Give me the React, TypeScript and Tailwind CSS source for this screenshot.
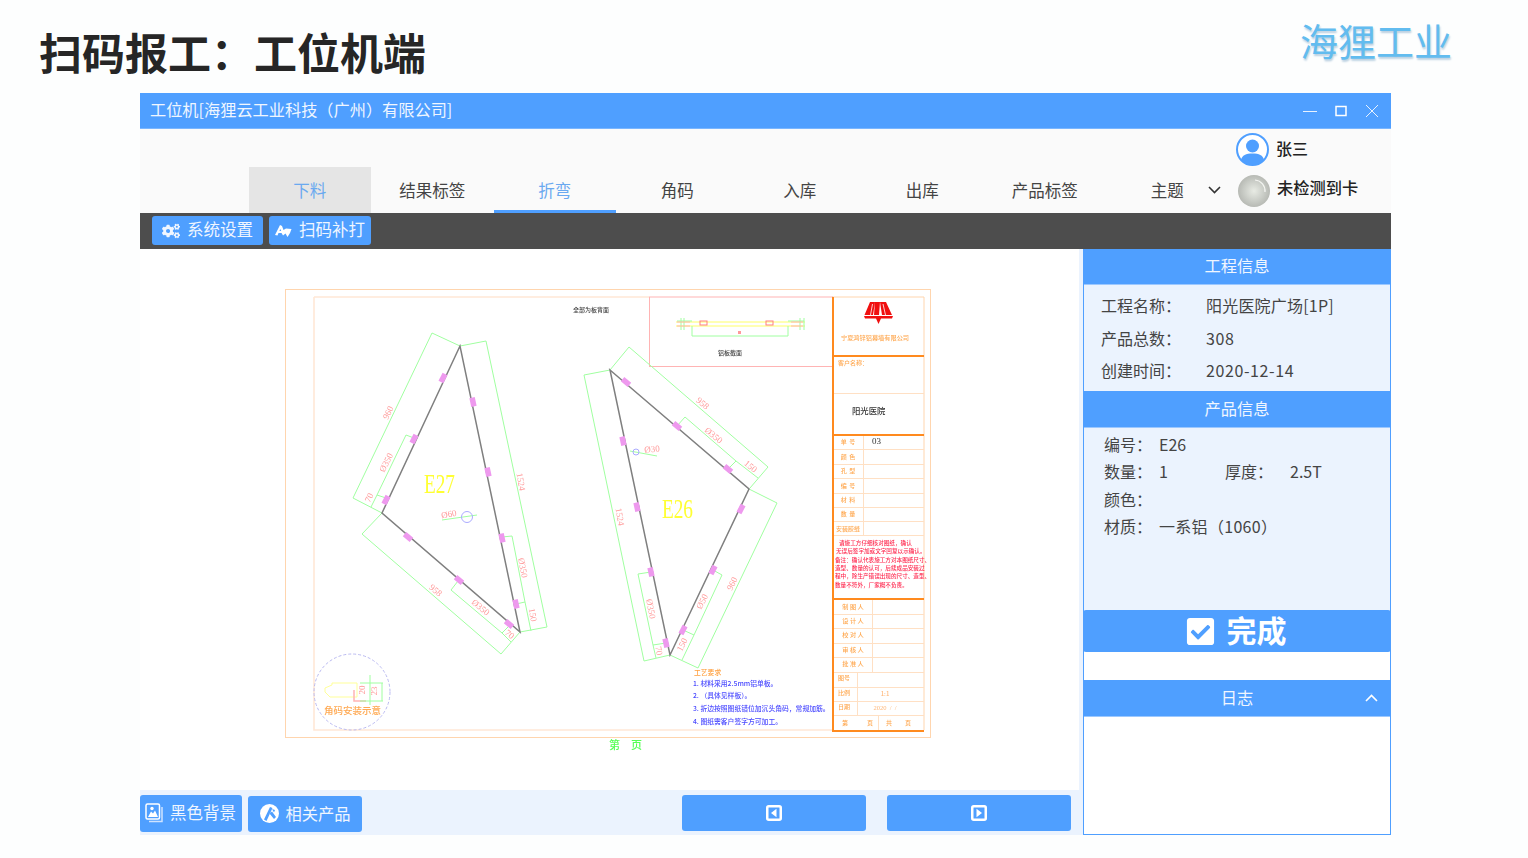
import React from "react";
import { FaCogs, FaCheckSquare } from "react-icons/fa";

const CJK = '"Noto Sans CJK SC", sans-serif';
const SERIF = '"Liberation Serif", "Noto Sans CJK SC", serif';

const tabs = ["下料", "结果标签", "折弯", "角码", "入库", "出库", "产品标签", "主题"];

function Mark({ x, y, a }: { x: number; y: number; a: number }) {
  return <rect x={x - 2.75} y={y - 4.5} width={5.5} height={9} fill="#ee99ee" transform={`rotate(${a} ${x} ${y})`} />;
}

function Dim({ x, y, a, t }: { x: number; y: number; a: number; t: string }) {
  return (
    <text x={x} y={y} fontSize={9} fontWeight={400} fill="#ff9a9a" textAnchor="middle" dominantBaseline="middle" fontFamily={SERIF} transform={`rotate(${a} ${x} ${y})`}>
      {t}
    </text>
  );
}

function Drawing() {
  const marks: [number, number, number][] = [
    [443, 378, 27], [414, 439, 27], [386, 500, 27], [473, 402, -12], [488, 472, -12], [408, 537, -50], [459, 580, -50], [509, 624, -50], [502, 538, -12], [516, 604, -12],
    [626, 382, -50], [677, 426, -50], [728, 469, -50], [623, 441, -12], [637, 507, -12], [741, 509, 27], [651, 572, -12], [666, 643, -12], [683, 630, 27], [713, 570, 27],
  ];
  const dims: [number, number, number, string][] = [
    [389, 413, -63, "960"], [387, 463, -63, "Ø350"], [370, 498, -63, "70"], [520, 482, 80, "1524"], [449, 515, -10, "Ø60"], [522, 568, 80, "Ø350"], [532, 615, 80, "150"], [435, 591, 40, "958"], [480, 608, 40, "Ø350"], [509, 635, 40, "70"],
    [702, 404, 40, "958"], [713, 436, 40, "Ø350"], [750, 467, 40, "150"], [652, 450, -5, "Ø30"], [619, 517, 80, "1524"], [650, 609, 80, "Ø350"], [658, 651, 80, "70"], [703, 602, -63, "Ø50"], [683, 645, -63, "150"], [733, 584, -63, "960"],
  ];
  const thin = "#ffe0c4";
  const rowLabels: [number, string][] = [[444, "单  号"], [459, "颜  色"], [473, "孔  型"], [488, "编  号"], [502, "材  料"], [516, "数  量"], [531, "安装胶缝"]];
  const signers: [number, string][] = [[609, "制 图 人"], [623, "设 计 人"], [637, "校 对 人"], [652, "审 核 人"], [666, "批 准 人"]];
  const notice: [number, number, string][] = [
    [839, 545, "请施工方仔细核对图纸，确认"],
    [836, 553, "无误后签字加或文字回复以示确认。"],
    [835, 562, "备注：确认代表施工方对本图纸尺寸、"],
    [835, 570, "造型、数量的认可，后续成品安装过"],
    [835, 578, "程中，除生产错误出现的尺寸、造型、"],
    [835, 587, "数量不符外，厂家概不负责。"],
  ];
  return (
    <svg viewBox="285 285 650 470" width={650} height={470} className="block blur-[0.3px]" style={{ fontFamily: CJK, fontWeight: 500 }}>
      <rect x={285.5} y={289.5} width={645} height={448} fill="none" stroke="#ffd5ae" />
      <path d="M314 297V730H832M314 297H649" fill="none" stroke="#ffe8d6" strokeWidth={1.6} />
      <path d="M832 297H924V730" fill="none" stroke="#ffd5ae" />
      <rect x={649.5} y={297} width={183} height={69.5} fill="none" stroke="#ffb4b4" />

      <g fill="none" stroke="#a0ffa0" strokeWidth={1}>
        <path d="M460 346L432 333L353 498L382 513M460 346L486 341L547 627L520 632M382 513L362 534L501 654L520 632" />
        <path d="M414 438L406 435L377 495L386 498M377 495L371 507M458 581L451 590L502 633L511 624M502 633L511 642M502 537L512 536L525 602L516 604M525 602L531 631" />
        <path d="M442 520L477 515" />
        <path d="M610 370L629 347L768 467L750 488M610 370L584 375L644 661L670 655M749 489L777 503L698 668L670 655" />
        <path d="M677 426L685 417L736 461L728 469M736 461L758 478M651 572L638 574L653 645L666 643M653 645L656 658M713 570L722 575L694 635L683 630M694 635L682 660" />
        <path d="M630 451L657 456" />
      </g>
      <g fill="none" stroke="#7f7f7f" strokeWidth={1.5}>
        <path d="M460 346L382 513L520 632Z" />
        <path d="M610 370L749 489L670 655Z" />
      </g>
      {marks.map(([x, y, a], i) => <Mark key={i} x={x} y={y} a={a} />)}
      {dims.map(([x, y, a, t], i) => <Dim key={i} x={x} y={y} a={a} t={t} />)}
      <circle cx={467} cy={517} r={5.5} fill="none" stroke="#aaaaff" />
      <circle cx={636} cy={452} r={3} fill="none" stroke="#aaaaff" />
      <text x={424} y={493} fontSize={28} fontWeight={400} fill="#ffff33" fontFamily={SERIF} textLength={31} lengthAdjust="spacingAndGlyphs">E27</text>
      <text x={662} y={518} fontSize={28} fontWeight={400} fill="#ffff33" fontFamily={SERIF} textLength={31} lengthAdjust="spacingAndGlyphs">E26</text>

      <text x={573} y={312} fontSize={6} fill="#444">全部为板背面</text>

      <g fill="none" strokeWidth={1}>
        <path d="M676 322H805M676 326H805" stroke="#ffff66" />
        <path d="M692 326V336H788V326M681 318V330M684 318V330M800 318V330M804 318V330M677 321H692M788 321H804" stroke="#a0ffa0" />
        <rect x={700} y={321} width={7} height={4} stroke="#ff8080" />
        <rect x={766} y={321} width={7} height={4} stroke="#ff8080" />
        <path d="M677 322H690M791 322H803M677 326H690M791 326H803" stroke="#ffb4b4" />
      </g>
      <rect x={738} y={331} width={3} height={3} fill="#ff9a9a" />
      <text x={718} y={355} fontSize={6} fill="#444">铝板截面</text>

      <circle cx={352} cy={692} r={38} fill="none" stroke="#b9b9f0" strokeDasharray="3 2" />
      <path d="M332 683H357V697H330L325 692V688L332 685Z" fill="none" stroke="#ffff99" />
      <path d="M354 690V701H366" fill="none" stroke="#ffb4b4" strokeWidth={1.5} />
      <path d="M360 683H383M360 701H383M370 675V705M382 683V701" fill="none" stroke="#a0ffa0" />
      <Dim x={363} y={690} a={-90} t="20" />
      <Dim x={375} y={691} a={-90} t="23" />
      <text x={324} y={714} fontSize={9.5} fill="#ffa850">角码安装示意</text>

      {/* title block */}
      <g fill="none" stroke={thin}>
        <path d="M833 393.5H924" />
        <path d="M833 449.5H924M833 464.5H924M833 478.5H924M833 493.5H924M833 507.5H924M833 521.5H924M833 535.5H924M863.5 435V535" />
        <path d="M833 614.5H924M833 628.5H924M833 643.5H924M833 657.5H924M833 672.5H924M833 687.5H924M833 701.5H924M833 715.5H924" />
        <path d="M872.5 600V672M857.5 672V715M878.5 715V730" />
      </g>
      <g fill="none" stroke="#ff8a1e" strokeWidth={2}>
        <path d="M833 297V731H924M833 356H924M833 435H924M833 599H924" />
      </g>
      <path d="M870 302H875L873 315H864.5ZM880 302H886L892 315H882Z M875 302H880L879 315H874Z M864 316H893L892 318.5H881L878.5 324L876 318.5H865Z" fill="#f01010" />
      <path d="M872.5 304L870.5 315M883 304L885.5 315" stroke="#fff" strokeWidth={0.8} fill="none" />
      <text x={841} y={340} fontSize={6.2} fill="#ffa850">宁夏鸿锌铝幕墙有限公司</text>
      <text x={838} y={365} fontSize={6} fill="#ffa850">客户名称：</text>
      <text x={852} y={414} fontSize={8.4} fill="#333">阳光医院</text>
      <text x={872} y={444} fontSize={9} fill="#333" fontFamily={SERIF}>03</text>
      {rowLabels.map(([y, t]) => <text key={y} x={848} y={y} fontSize={6} fill="#ffa850" textAnchor="middle" style={{ whiteSpace: "pre" }}>{t}</text>)}
      {notice.map(([x, y, t]) => <text key={y} x={x} y={y} fontSize={5.6} fill="#ff2a50">{t}</text>)}
      {signers.map(([y, t]) => <text key={y} x={853} y={y} fontSize={6.2} fill="#ffa850" textAnchor="middle">{t}</text>)}
      <text x={844} y={680} fontSize={6} fill="#ffa850" textAnchor="middle">图号</text>
      <text x={844} y={695} fontSize={6} fill="#ffa850" textAnchor="middle">比例</text>
      <text x={844} y={709} fontSize={6} fill="#ffa850" textAnchor="middle">日期</text>
      <text x={885} y={696} fontSize={6} fill="#ffb87a" textAnchor="middle">1:1</text>
      <text x={885} y={710} fontSize={6.5} fill="#ffb87a" textAnchor="middle" fontFamily={SERIF} style={{ whiteSpace: "pre" }}>2020  /  /</text>
      <text x={845} y={725} fontSize={6} fill="#ffa850" textAnchor="middle">第</text>
      <text x={870} y={725} fontSize={6} fill="#ffa850" textAnchor="middle">页</text>
      <text x={889} y={725} fontSize={6} fill="#ffa850" textAnchor="middle">共</text>
      <text x={908} y={725} fontSize={6} fill="#ffa850" textAnchor="middle">页</text>

      <text x={694} y={675} fontSize={6.8} fill="#ffa040">工艺要求</text>
      <text x={693} y={686} fontSize={6.8} fill="#4a4aff">1. 材料采用2.5mm铝单板。</text>
      <text x={693} y={698} fontSize={6.8} fill="#4a4aff">2. （具体见样板）。</text>
      <text x={693} y={711} fontSize={6.8} fill="#4a4aff">3. 折边按照图纸错位加沉头角码，常规加筋。</text>
      <text x={693} y={724} fontSize={6.8} fill="#4a4aff">4. 图纸需客户签字方可加工。</text>
      <text x={609} y={749} fontSize={11} fill="#55ff55">第</text>
      <text x={631} y={749} fontSize={11} fill="#55ff55">页</text>
    </svg>
  );
}

function Avatar() {
  return (
    <svg width={33} height={33} viewBox="0 0 33 33">
      <circle cx={16.5} cy={16.5} r={15.5} fill="#fff" stroke="#4f9fff" strokeWidth={2} />
      <circle cx={16.5} cy={13} r={6.5} fill="#4f9fff" />
      <path d="M5 27C6 22 10 20.5 16.5 20.5S27 22 28 27A15 15 0 0 1 5 27Z" fill="#4f9fff" />
    </svg>
  );
}

function Ball() {
  return (
    <div className="w-[32px] h-[32px] rounded-full bg-[radial-gradient(circle_at_50%_50%,#e8ebe4_0%,#c9ccc6_45%,#a3a5a0_100%)] flex items-center justify-center">
      <svg width={32} height={32} viewBox="0 0 32 32">
        <path d="M17 5A11 11 0 0 1 27 17" fill="none" stroke="#f4f5f2" strokeWidth={1.2} />
      </svg>
    </div>
  );
}

function ScanIcon() {
  return (
    <svg width={17} height={14} viewBox="0 0 17 14" fill="#fff">
      <path fillRule="evenodd" d="M0 11L5 1L7 2L8.5 6L11 4.5L16.5 5L15 9L12.5 13L10.5 9.5L8 11.5L6.5 9H3.5L2.5 11.5ZM5.2 5L4.5 7H6.2Z" />
    </svg>
  );
}

function ImageIcon() {
  return (
    <svg width={19} height={20} viewBox="0 0 19 20" fill="none">
      <rect x={1} y={1} width={13.5} height={15} rx={1.5} stroke="#fff" strokeWidth={1.5} />
      <path d="M3 14L6 8.5L8 10.5L10 7.5L13 14Z" fill="#fff" />
      <circle cx={7} cy={5.5} r={1.7} fill="#fff" />
      <path d="M17 4V18.5H4" stroke="#cfe3ff" strokeWidth={1.5} />
    </svg>
  );
}

function RelatedIcon() {
  return (
    <svg width={19} height={19} viewBox="0 0 19 19">
      <circle cx={9.5} cy={9.5} r={9.5} fill="#fff" />
      <path d="M4 15.5L10 3L12.5 4L6.5 17ZM9.5 9.5L14 15L16 13L12 7.5ZM12 5L15 6L14 8.5Z" fill="#4f9fff" />
    </svg>
  );
}

function CaretBox({ left }: { left?: boolean }) {
  return (
    <svg width={16} height={16} viewBox="0 0 16 16">
      <rect x={1.25} y={1.25} width={13.5} height={13.5} rx={1.5} fill="none" stroke="#fff" strokeWidth={2.5} />
      <path d={left ? "M10.5 3.8V12.2L5 8Z" : "M5.5 3.8V12.2L11 8Z"} fill="#fff" />
    </svg>
  );
}

function Chevron({ up }: { up?: boolean }) {
  return (
    <svg width={13} height={8} viewBox="0 0 13 8" fill="none" stroke={up ? "#fff" : "#333"} strokeWidth={1.6}>
      <path d={up ? "M1 7L6.5 1.5L12 7" : "M1 1L6.5 6.5L12 1"} />
    </svg>
  );
}

function PanelHeader({ title, tall, chevron }: { title: string; tall?: boolean; chevron?: boolean }) {
  return (
    <div className={`relative flex items-center justify-center bg-[#4f9fff] text-[#f0f6ff] text-[16.25px] border-b border-[#9cc8ff] ${tall ? "h-[37px] pb-[1px]" : "h-[36px] pb-[2px]"}`}>
      {title}
      {chevron && <span className="absolute right-[12px] top-[14px] flex"><Chevron up /></span>}
    </div>
  );
}

function Info({ label, value, wide }: { label: string; value: string; wide?: boolean }) {
  return (
    <div className="flex h-[32.5px] items-center">
      <span className="w-[105px]">{label}</span>
      <span className={wide ? "tracking-[0.6px]" : "tracking-[0.2px]"}>{value}</span>
    </div>
  );
}

export default function App() {
  return (
    <div className="w-[1528px] h-[858px] bg-[#fdfefe] overflow-hidden text-[#333]" style={{ fontFamily: CJK }}>
      <header className="h-[93px] flex justify-between">
        <h1 className="pl-[39px] pt-[16px] text-[43px] leading-[70px] font-bold text-[#262626]">扫码报工：工位机端</h1>
        <div className="pr-[76px] pt-[10px] text-[38px] leading-[60px] font-normal text-[#62bcef] [text-shadow:1px_2px_2px_#b9cfe0]">海狸工业</div>
      </header>

      <main className="ml-[140px] w-[1251px]">
        <div className="h-[36px] bg-[#4f9fff] flex items-center justify-between pl-[10px] pr-[12px] text-[#f0f6ff] text-[16.2px] border-b border-[#7ab6ff]">
          <span className="pb-[2px]">工位机[海狸云工业科技（广州）有限公司]</span>
          <div className="flex items-center gap-[17px]">
            <svg width={14} height={14} viewBox="0 0 14 14" stroke="#e8f2ff" fill="none"><path d="M0 7.5H14" /></svg>
            <svg width={14} height={14} viewBox="0 0 14 14" stroke="#fff" fill="none" strokeWidth={1.5}><rect x={2} y={2.5} width={10} height={9} /></svg>
            <svg width={14} height={14} viewBox="0 0 14 14" stroke="#e8f2ff" fill="none"><path d="M1 1L13 13M13 1L1 13" /></svg>
          </div>
        </div>

        <div className="h-[84px] bg-[#fafafa] flex relative">
          <div className="pl-[108.5px] flex self-end">
            {tabs.map((t, i) => (
              <div
                key={t}
                className={`h-[46px] w-[122.5px] flex items-center justify-center text-[16.5px] ${
                  i === 0 ? "bg-[#e5e5e5] text-[#6aa9f0]" : i === 2 ? "text-[#6aa9f0] border-b-[3px] border-[#4f9fff] pt-[3px]" : "text-[#444]"
                }`}
              >
                {t}
              </div>
            ))}
          </div>
          <div className="absolute left-[1068px] top-[57px] flex"><Chevron /></div>
          <div className="absolute left-[1096px] top-[4px] flex flex-col gap-[8px]">
            <div className="flex items-center gap-[7px] h-[33px] text-[16px] font-medium text-[#222]"><Avatar /><span className="pb-[3px]">张三</span></div>
            <div className="flex items-center gap-[7px] h-[33px] pl-[2px] text-[16.25px] font-medium text-[#222]"><Ball /><span className="pb-[7px]">未检测到卡</span></div>
          </div>
        </div>

        <div className="h-[36px] bg-[#4d4d4d] flex items-start gap-[6px] pl-[12px] pt-[3px]">
          <button className="h-[29px] w-[111px] bg-[#4f9fff] rounded-[3px] text-[#f0f6ff] text-[16.5px] flex items-center justify-center gap-[7px]"><FaCogs className="text-[18px]" /><span className="pb-[2px]">系统设置</span></button>
          <button className="h-[29px] w-[102px] bg-[#4f9fff] rounded-[3px] text-[#f0f6ff] text-[16.5px] flex items-center justify-center gap-[7px]"><ScanIcon /><span className="pb-[2px]">扫码补打</span></button>
        </div>

        <div className="flex h-[586px]">
          <section className="w-[939px] flex flex-col">
            <div className="flex-1 pl-[145px] pt-[36px] bg-white">
              <Drawing />
            </div>
            <div className="h-[45px] bg-[#ebf3fe] flex items-start pt-[5px]">
              <button className="h-[37px] w-[102px] bg-[#4f9fff] rounded-[3px] text-[#f0f6ff] text-[16.5px] flex items-center justify-center gap-[6px] pr-[1px]"><span className="pb-[2px]"><ImageIcon /></span><span className="pb-[3px]">黑色背景</span></button>
              <button className="mt-[1px] ml-[6px] h-[36px] w-[114px] bg-[#4f9fff] rounded-[3px] text-[#f0f6ff] text-[16.25px] flex items-center justify-center gap-[7px]"><span className="pb-[2px]"><RelatedIcon /></span><span className="pb-[1px]">相关产品</span></button>
              <button className="ml-[320px] h-[36px] w-[184px] bg-[#4f9fff] rounded-[3px] flex items-center justify-center"><CaretBox left /></button>
              <button className="ml-[21px] h-[36px] w-[184px] bg-[#4f9fff] rounded-[3px] flex items-center justify-center"><CaretBox /></button>
            </div>
          </section>

          <div className="w-[4px] bg-[#ebf3fe]" />

          <aside className="w-[308px] flex flex-col border-x border-[#4f9fff] border-b bg-white">
            <PanelHeader title="工程信息" />
            <div className="h-[106px] bg-[#ebf3fe] pl-[17px] pt-[4px] text-[16px] text-[#444]">
              <Info label="工程名称：" value="阳光医院广场[1P]" />
              <Info label="产品总数：" value="308" wide />
              <Info label="创建时间：" value="2020-12-14" wide />
            </div>
            <PanelHeader title="产品信息" tall />
            <div className="h-[182px] bg-[#ebf3fe] pl-[20px] pt-[3px] text-[16px] text-[#444] leading-[27.4px]">
              <div className="flex"><span className="w-[55px]">编号：</span><span>E26</span></div>
              <div className="flex"><span className="w-[55px]">数量：</span><span className="w-[66px]">1</span><span className="w-[65px]">厚度：</span><span>2.5T</span></div>
              <div className="flex"><span className="w-[55px]">颜色：</span></div>
              <div className="flex"><span className="w-[55px]">材质：</span><span className="tracking-[0.3px]">一系铝（1060）</span></div>
            </div>
            <button className="h-[42px] -mx-px bg-[#4f9fff] rounded-[3px] text-white text-[30px] font-bold flex items-center justify-center gap-[11px] pr-[3px]"><FaCheckSquare className="text-[31px]" /><span className="pb-[4px]">完成</span></button>
            <div className="h-[28px] bg-white" />
            <PanelHeader title="日志" tall chevron />
            <div className="flex-1 bg-white" />
          </aside>
        </div>
      </main>
    </div>
  );
}
